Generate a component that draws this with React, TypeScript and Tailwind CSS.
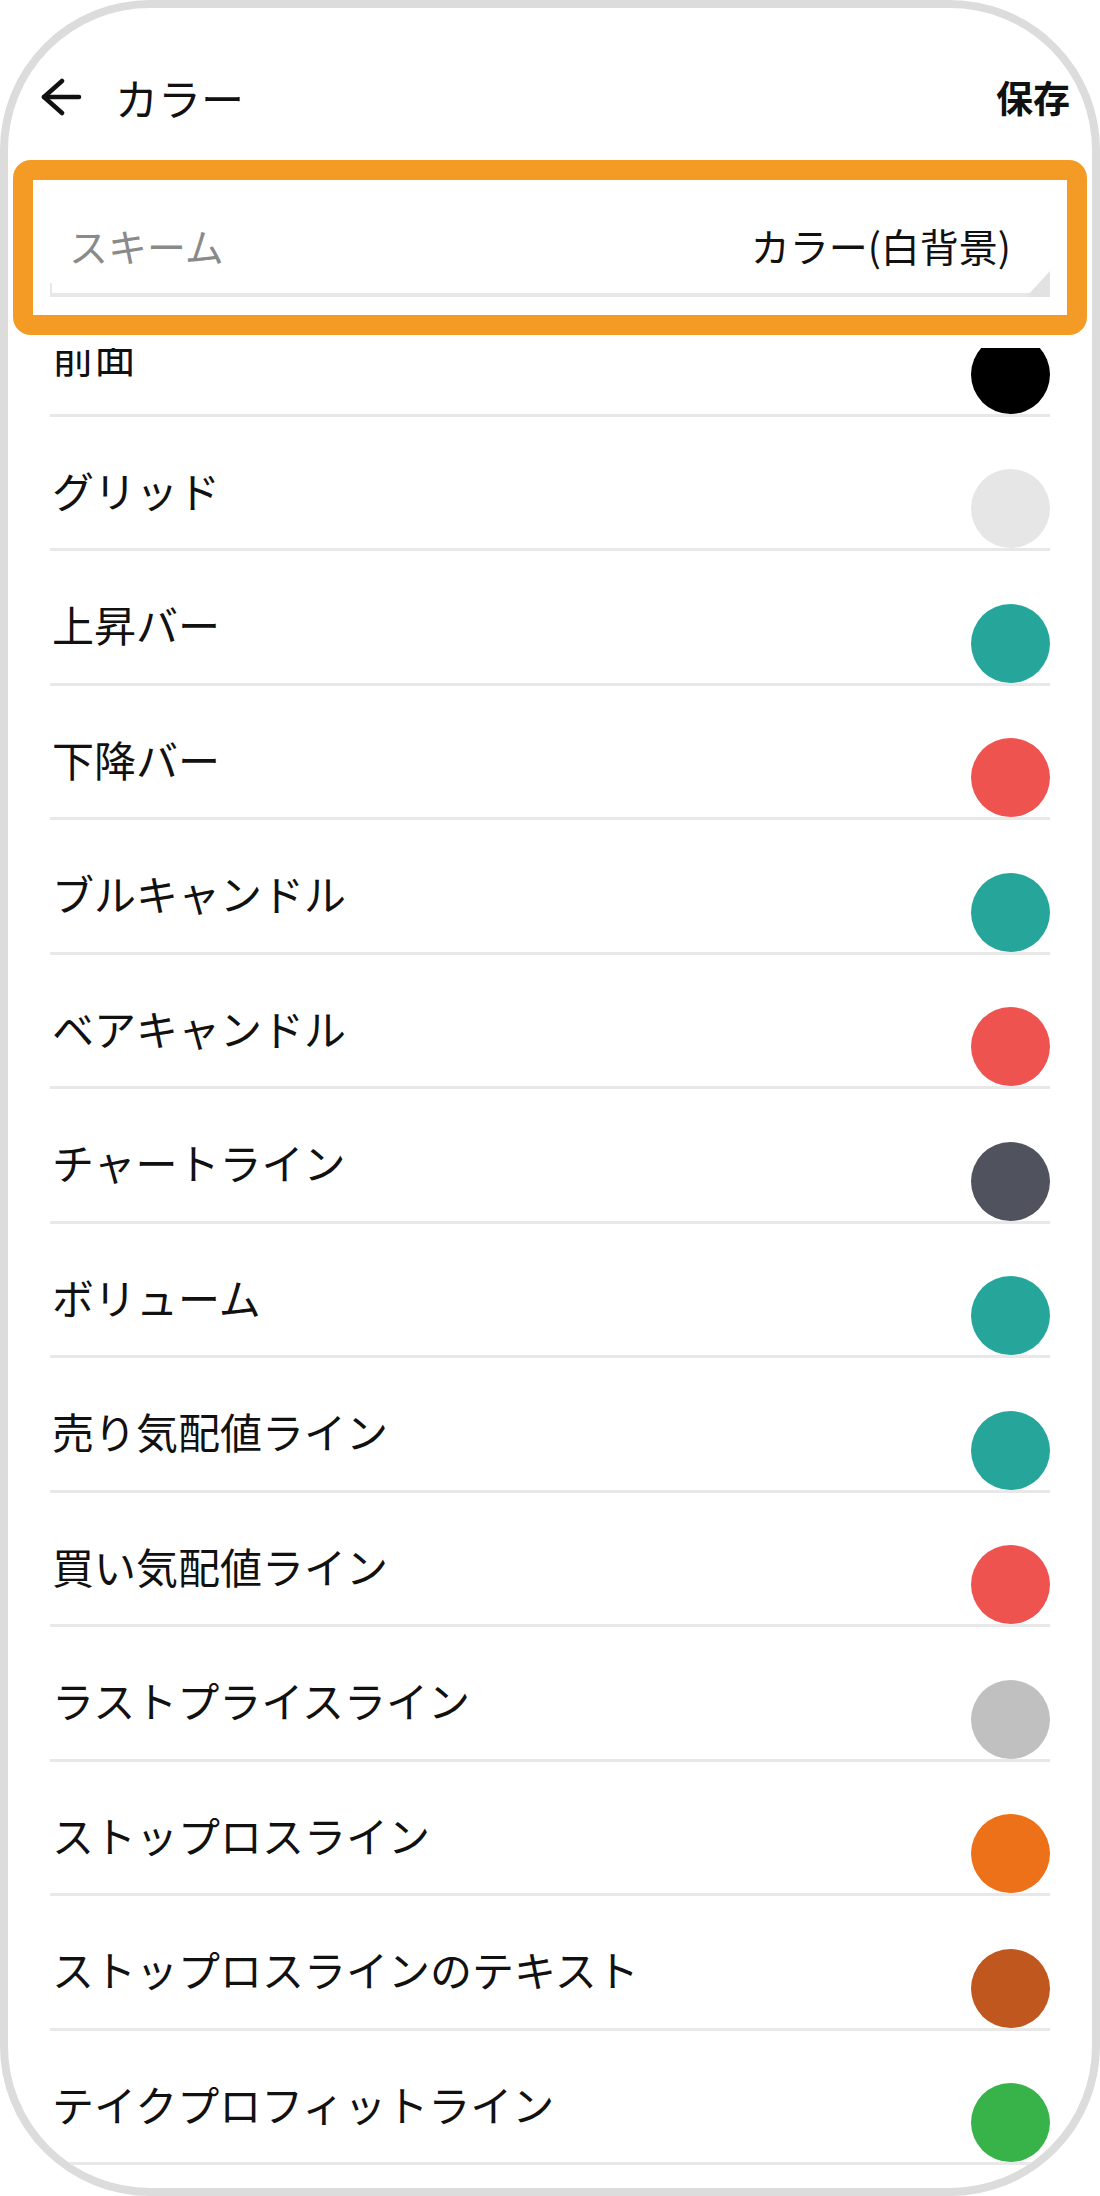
const ROWS: { label: string; dot: string }[] = [
  { label: "前面", dot: "bg-[#000000]" },
  { label: "グリッド", dot: "bg-[#e6e6e6]" },
  { label: "上昇バー", dot: "bg-[#26a69a]" },
  { label: "下降バー", dot: "bg-[#ef5350]" },
  { label: "ブルキャンドル", dot: "bg-[#26a69a]" },
  { label: "ベアキャンドル", dot: "bg-[#ef5350]" },
  { label: "チャートライン", dot: "bg-[#50535e]" },
  { label: "ボリューム", dot: "bg-[#26a69a]" },
  { label: "売り気配値ライン", dot: "bg-[#26a69a]" },
  { label: "買い気配値ライン", dot: "bg-[#ef5350]" },
  { label: "ラストプライスライン", dot: "bg-[#c0c0c0]" },
  { label: "ストップロスライン", dot: "bg-[#ec7118]" },
  { label: "ストップロスラインのテキスト", dot: "bg-[#bf571f]" },
  { label: "テイクプロフィットライン", dot: "bg-[#37b34a]" },
];

function BackArrow() {
  return (
    <svg width="42" height="38" viewBox="0 0 42 38" fill="none" stroke="#111" strokeWidth="4.5" strokeLinecap="round" strokeLinejoin="round">
      <path d="M39 19H4" />
      <path d="M22 3L4 19l18 16" />
    </svg>
  );
}

export default function App() {
  return (
    <div
      className="h-[2196px] w-[1100px] bg-white text-[#111]"
      style={{ fontFamily: '"Noto Sans CJK JP", "Noto Sans", sans-serif' }}
    >
      <div className="relative flex h-full flex-col overflow-hidden rounded-[150px] border-[8px] border-[#dcdcdc] bg-white">
        {/* Header */}
        <div className="mt-[67px] flex h-[44px] items-center justify-between pl-[32px] pr-[22px]">
          <div className="flex items-center">
            <BackArrow />
            <span className="ml-[33px] text-[43px] leading-none">カラー</span>
          </div>
          <span className="text-[37px] font-bold leading-none">保存</span>
        </div>

        {/* Scheme select */}
        <div className="px-[42px] pt-[107px]">
          <div className="flex items-center justify-between pl-[19px] pr-[39px] text-[39px] leading-none">
            <span className="text-[#8a8a8a]">スキーム</span>
            <span>カラー(白背景)</span>
          </div>
          <div className="relative mt-[28px] h-[4px] bg-[#e8e8e8]">
            <span className="absolute bottom-0 left-0 h-[14px] w-[2px] bg-[#e8e8e8]" />
            <svg className="absolute bottom-0 right-0" width="24" height="26" viewBox="0 0 24 26">
              <polygon points="24,0 24,26 0,26" fill="#e2e2e2" />
            </svg>
          </div>
        </div>

        {/* Highlight box */}
        <div className="absolute left-[5px] top-[152px] h-[175px] w-[1074px] rounded-[18px] border-[20px] border-[#f39b24]" />

        {/* Color list */}
        <div className="mt-[51px] flex-1 overflow-hidden px-[42px]">
          <div className="-mt-[66px]">
            {ROWS.map((row) => (
              <div
                key={row.label}
                className="flex h-[134.5px] justify-between border-b-[3px] border-[#e8e8e8]"
              >
                <span className="mt-[52px] pl-[2px] text-[42px] leading-none">{row.label}</span>
                <span className={`h-[79px] w-[79px] self-end rounded-full ${row.dot}`} />
              </div>
            ))}
          </div>
        </div>
      </div>
    </div>
  );
}
